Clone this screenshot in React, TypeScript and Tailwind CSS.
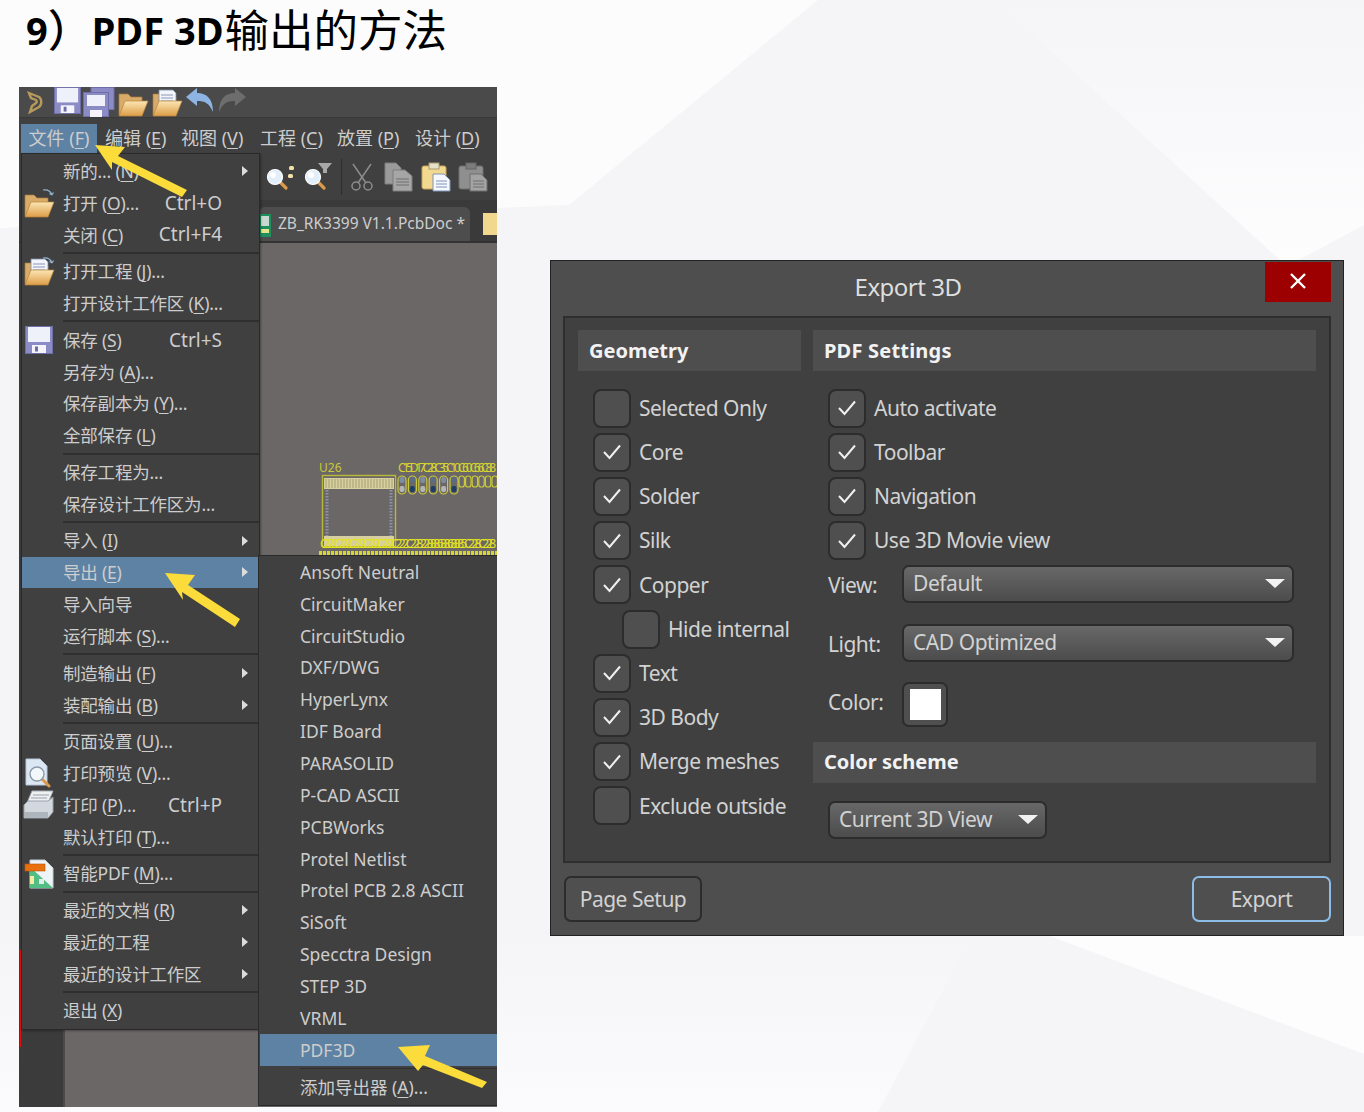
import type { ReactNode } from "react";

const FONT = "font-['Noto_Sans','Noto_Sans_CJK_SC',sans-serif]";

type MenuEntry = { label: string; shortcut?: string; sub?: boolean; icon?: ReactNode; active?: boolean };

function Floppy({ size = 28 }: { size?: number }) {
  return (
    <svg width={size} height={size} viewBox="0 0 28 28">
      <rect x="0.5" y="0.5" width="27" height="27" fill="#8b8bc6" stroke="#6f6fa8" />
      <rect x="3" y="1" width="22" height="15" fill="#eef0fa" />
      <rect x="7" y="19" width="14" height="8" fill="#f4f4fa" />
      <rect x="10" y="20.5" width="3" height="5" fill="#6f6fa8" />
    </svg>
  );
}

function SaveAll() {
  return (
    <svg width="32" height="30" viewBox="0 0 32 30">
      <rect x="8" y="0.5" width="23" height="22" fill="#8b8bc6" stroke="#6f6fa8" />
      <rect x="0.5" y="5.5" width="25" height="24" fill="#8b8bc6" stroke="#6f6fa8" />
      <rect x="4" y="8" width="18" height="11" fill="#eef0fa" />
      <rect x="7" y="23" width="12" height="7" fill="#f4f4fa" />
    </svg>
  );
}

function Folder({ paper, arrow }: { paper?: boolean; arrow?: boolean }) {
  return (
    <svg width="32" height="30" viewBox="0 0 32 30">
      <defs>
        <linearGradient id="folderFront" x1="0" y1="0" x2="0" y2="1">
          <stop offset="0" stopColor="#fbe6b4" />
          <stop offset="1" stopColor="#dd9d48" />
        </linearGradient>
      </defs>
      <path d="M2 28 V7 H11 L14 10 H25 V28 Z" fill="#d9ab68" stroke="#a97a3a" strokeWidth="0.7" />
      {paper && <path d="M8 3 H22 L25 6 V19 H8 Z" fill="#f2f5fb" stroke="#7f8aa5" strokeWidth="0.8" />}
      {paper && <path d="M10 8 H22 M10 11 H22 M10 14 H22" stroke="#8a97b5" strokeWidth="1" />}
      <path d="M2 29 L8 14 H31 L25 29 Z" fill="url(#folderFront)" stroke="#b98436" strokeWidth="0.7" />
      {arrow && <path d="M20 2 Q27 1 29 7 M29 7 L26.5 5.5 M29 7 L30.5 4.5" fill="none" stroke="#8fb3d3" strokeWidth="1.2" />}
    </svg>
  );
}

function Undo({ color, flip }: { color: string; flip?: boolean }) {
  return (
    <svg width="30" height="26" viewBox="0 0 30 26" className={flip ? "-scale-x-100" : ""}>
      <path d="M1 10 L12 1 V6 C22 6 28 12 28 25 C24 16 20 14 12 14 V19 Z" fill={color} />
    </svg>
  );
}

function Logo() {
  return (
    <svg width="16" height="24" viewBox="0 0 16 24">
      <path d="M2 3 L12 7 C15 9 15 15 12 17 L3 22 L5 16 L9 13 C10 12 10 11 9 10 L4 8 Z" fill="none" stroke="#b69a5c" strokeWidth="2.4" />
    </svg>
  );
}

function Magnifier({ extra }: { extra: "dots" | "funnel" }) {
  return (
    <svg width="30" height="30" viewBox="0 0 30 30">
      <path d="M14 19 L21 26" stroke="#d99a4c" strokeWidth="3.2" strokeLinecap="round" />
      <circle cx="10" cy="15" r="7.5" fill="#e2eef9" stroke="#ffffff" strokeWidth="1.2" />
      <circle cx="8" cy="13" r="3" fill="#ffffff" />
      {extra === "dots" ? (
        <>
          <rect x="24" y="4" width="5" height="4" rx="1.5" fill="#f2e2a8" />
          <rect x="23" y="12" width="5" height="4" rx="1.5" fill="#f2e2a8" />
        </>
      ) : (
        <path d="M15 1 H29 L24 7 V11 H20 V7 Z" fill="#a8a8a8" />
      )}
    </svg>
  );
}

function Scissors() {
  return (
    <svg width="24" height="28" viewBox="0 0 24 28" fill="none" stroke="#8c8c8c" strokeWidth="1.5">
      <path d="M3 1 L16 20 M21 1 L8 20" />
      <circle cx="6" cy="23" r="4" />
      <circle cx="18" cy="23" r="4" />
    </svg>
  );
}

function CopyDocs() {
  return (
    <svg width="30" height="30" viewBox="0 0 30 30">
      <path d="M1 1 H12 L17 6 V22 H1 Z" fill="#9a9a9a" stroke="#7c7c7c" />
      <path d="M9 8 H21 L28 14 V29 H9 Z" fill="#a6a6a6" stroke="#7c7c7c" />
      <path d="M12 17 H25 M12 20 H25 M12 23 H25" stroke="#6e6e6e" />
    </svg>
  );
}

function Paste({ gray }: { gray?: boolean }) {
  return (
    <svg width="30" height="30" viewBox="0 0 30 30">
      <rect x="1" y="4" width="24" height="23" rx="2" fill={gray ? "#8f8f8f" : "#f3d990"} stroke={gray ? "#6f6f6f" : "#c9a55c"} />
      <rect x="8" y="1" width="10" height="6" fill={gray ? "#7c7c7c" : "#e6e0c8"} stroke={gray ? "#666" : "#a59a70"} />
      <path d="M12 12 H23 L29 18 V29 H12 Z" fill={gray ? "#a3a3a3" : "#f5f8fc"} stroke={gray ? "#6f6f6f" : "#7f94b8"} />
      <path d="M15 19 H26 M15 22 H26 M15 25 H26" stroke={gray ? "#6e6e6e" : "#7f94b8"} />
    </svg>
  );
}

function PreviewIcon() {
  return (
    <svg width="28" height="30" viewBox="0 0 28 30">
      <path d="M1 1 H15 L22 8 V27 H1 Z" fill="#dce7f4" stroke="#b9c6d8" />
      <path d="M15 19 L24 28" stroke="#d99a4c" strokeWidth="3" strokeLinecap="round" />
      <circle cx="12" cy="16" r="7" fill="#f2f7fc" stroke="#8d99a8" strokeWidth="1.4" />
    </svg>
  );
}

function PrintIcon() {
  return (
    <svg width="32" height="30" viewBox="0 0 32 30">
      <path d="M9 1 H30 L25 13 H4 Z" fill="#eef0f2" stroke="#a8adb4" />
      <path d="M10 5 H26 M8 8 H24" stroke="#9aa2ac" />
      <path d="M1 15 L5 11 H25 L30 7 V22 L25 28 H1 Z" fill="#d3d8de" stroke="#9aa2ac" />
      <rect x="1" y="22" width="24" height="6" fill="#aeb5bd" />
    </svg>
  );
}

function SmartPdfIcon() {
  return (
    <svg width="30" height="30" viewBox="0 0 30 30">
      <path d="M6 1 H21 L29 9 V29 H6 Z" fill="#eef3f6" stroke="#c3cdd6" />
      <path d="M6 8 L29 29 H6 Z" fill="#53bd86" />
      <rect x="6" y="17" width="4" height="8" fill="#f3eda6" />
      <rect x="15" y="20" width="5" height="5" fill="#dfeee6" />
      <rect x="1" y="5" width="20" height="7" fill="#e8710e" stroke="#c2560a" strokeWidth="0.6" />
    </svg>
  );
}

// "&X" underlines the mnemonic letter
function Mnemonic({ text }: { text: string }) {
  const at = text.indexOf("&");
  if (at < 0) return <>{text}</>;
  return (
    <>
      {text.slice(0, at)}
      <span className="underline decoration-1 underline-offset-[3px]">{text[at + 1]}</span>
      {text.slice(at + 2)}
    </>
  );
}

function Row({ entry }: { entry: MenuEntry }) {
  return (
    <div className={`relative flex h-[31.87px] items-center whitespace-nowrap ${entry.active ? "bg-[#5e82a3]" : ""}`}>
      <div className="flex w-[41px] shrink-0 items-center justify-center pr-[7px]">{entry.icon}</div>
      <span className="text-[17.5px] tracking-[-0.2px]">
        <Mnemonic text={entry.label} />
      </span>
      {entry.shortcut && <span className="absolute right-[37px] text-[19px]">{entry.shortcut}</span>}
      {entry.sub && <span className="absolute right-[11px] h-0 w-0 border-y-[5px] border-l-[6px] border-y-transparent border-l-[#dcdcdc]" />}
    </div>
  );
}

function Sep() {
  return (
    <div className="flex h-[4.8px] items-center pl-[41px]">
      <div className="h-[2px] w-full bg-[#2f2f2f]" />
    </div>
  );
}

const groups: MenuEntry[][] = [
  [
    { label: "新的... (&N)", sub: true },
    { label: "打开 (&O)...", shortcut: "Ctrl+O", icon: <Folder arrow /> },
    { label: "关闭 (&C)", shortcut: "Ctrl+F4" },
  ],
  [
    { label: "打开工程 (&J)...", icon: <Folder paper arrow /> },
    { label: "打开设计工作区 (&K)..." },
  ],
  [
    { label: "保存 (&S)", shortcut: "Ctrl+S", icon: <Floppy /> },
    { label: "另存为 (&A)..." },
    { label: "保存副本为 (&Y)..." },
    { label: "全部保存 (&L)" },
  ],
  [{ label: "保存工程为..." }, { label: "保存设计工作区为..." }],
  [
    { label: "导入 (&I)", sub: true },
    { label: "导出 (&E)", sub: true, active: true },
    { label: "导入向导" },
    { label: "运行脚本 (&S)..." },
  ],
  [
    { label: "制造输出 (&F)", sub: true },
    { label: "装配输出 (&B)", sub: true },
  ],
  [
    { label: "页面设置 (&U)..." },
    { label: "打印预览 (&V)...", icon: <PreviewIcon /> },
    { label: "打印 (&P)...", shortcut: "Ctrl+P", icon: <PrintIcon /> },
    { label: "默认打印 (&T)..." },
  ],
  [{ label: "智能PDF (&M)...", icon: <SmartPdfIcon /> }],
  [
    { label: "最近的文档 (&R)", sub: true },
    { label: "最近的工程", sub: true },
    { label: "最近的设计工作区", sub: true },
  ],
  [{ label: "退出 (&X)" }],
];

const exporters = [
  "Ansoft Neutral",
  "CircuitMaker",
  "CircuitStudio",
  "DXF/DWG",
  "HyperLynx",
  "IDF Board",
  "PARASOLID",
  "P-CAD ASCII",
  "PCBWorks",
  "Protel Netlist",
  "Protel PCB 2.8 ASCII",
  "SiSoft",
  "Specctra Design",
  "STEP 3D",
  "VRML",
];

const menuBar = [
  { label: "编辑 (&E)", w: "w-[76px]" },
  { label: "视图 (&V)", w: "w-[79px]" },
  { label: "工程 (&C)", w: "w-[77px]" },
  { label: "放置 (&P)", w: "w-[78px]" },
  { label: "设计 (&D)", w: "w-[80px]" },
];

function PcbArt() {
  const caps = [0, 1, 2, 3, 4, 5];
  const small = [0, 1, 2, 3, 4, 5, 6, 7, 8];
  return (
    <svg width="178" height="97" viewBox="320 460 178 97" className="absolute right-0 top-[217px]">
      <text x="320" y="472" fontSize="12" fill="#c9c93a" fontFamily="Noto Sans">U26</text>
      {/* designators sit on top of each other on the board */}
      <text x="399" y="472" fontSize="12" fill="#d6d62e" fontFamily="Noto Sans" textLength="98" lengthAdjust="spacing">C15D17C28C35C10C60C66C88</text>
      <rect x="323.5" y="475.5" width="73" height="71" fill="none" stroke="#b8b83a" strokeWidth="1.4" />
      <rect x="325" y="478" width="70" height="11" fill="#d8cfa0" />
      <path d="M327 479 V488 M330 479 V488 M333 479 V488 M336 479 V488 M339 479 V488 M342 479 V488 M345 479 V488 M348 479 V488 M351 479 V488 M354 479 V488 M357 479 V488 M360 479 V488 M363 479 V488 M366 479 V488 M369 479 V488 M372 479 V488 M375 479 V488 M378 479 V488 M381 479 V488 M384 479 V488 M387 479 V488 M390 479 V488 M393 479 V488" stroke="#9a9466" strokeWidth="0.8" />
      <rect x="325" y="536" width="70" height="10" fill="#d8cfa0" />
      <path d="M328 490 V536 M392 490 V536" stroke="#8c93a8" strokeWidth="3" strokeDasharray="1.5 1.5" />
      <text x="321" y="548" fontSize="12" fill="#e4e41e" fontFamily="Noto Sans" textLength="176" lengthAdjust="spacing">C222C222C222C222C222C222C2282288868868885C228C228</text>
      {caps.map((c) => (
        <g key={c}>
          <rect x={399 + c * 10.4} y="476" width="8" height="18" rx="4" fill="none" stroke="#c9c93a" strokeWidth="1.2" />
          <rect x={400.5 + c * 10.4} y="477" width="5" height="6" rx="2" fill={c % 2 ? "#5b6b86" : "#7d8ba5"} />
          <rect x={400.5 + c * 10.4} y="486" width="5" height="6" rx="2" fill={c % 2 ? "#1e3d64" : "#b5b5b5"} />
        </g>
      ))}
      {small.map((c) => (
        <rect key={c} x={460 + c * 6.6} y="476" width="5.4" height="11" rx="2.6" fill="none" stroke="#c9c93a" strokeWidth="1.2" />
      ))}
      <path d="M320 553 H498" stroke="#d6d62e" strokeWidth="4" strokeDasharray="3 1" />
    </svg>
  );
}

function LeftShot() {
  return (
    <div className="relative flex h-[1020px] w-[478px] shrink-0 flex-col overflow-hidden bg-[#404040] text-[#cdcdcd]">
      <div className="flex h-[31px] items-start border-b border-[#3a3a3a] bg-[#4a4a4a] pl-[8px]">
        <div className="pt-[3px]">
          <Logo />
        </div>
        <div className="ml-[11px] flex items-start gap-[2px]">
          <Floppy size={27} />
          <SaveAll />
          <Folder />
          <Folder paper />
          <Undo color="#8db4e2" />
          <Undo color="#6d6d6d" flip />
        </div>
      </div>
      <div className="flex h-[35px] items-end whitespace-nowrap pl-[2px] text-[18px]">
        <div className="flex h-[29px] w-[76px] shrink-0 items-center justify-center bg-[#5e82a3] pb-[1px]">
          <Mnemonic text="文件 (&F)" />
        </div>
        {menuBar.map((item) => (
          <div key={item.label} className={`flex h-[29px] shrink-0 items-center pb-[1px] pl-[8px] ${item.w}`}>
            <Mnemonic text={item.label} />
          </div>
        ))}
      </div>

      <div className="flex h-[47px] items-center pl-[246px]">
        <Magnifier extra="dots" />
        <div className="ml-[8px]">
          <Magnifier extra="funnel" />
        </div>
        <div className="ml-[8px] mr-[8px] h-[36px] w-[1px] bg-[#2e2e2e]" />
        <Scissors />
        <div className="ml-[10px] flex gap-[7px]">
          <CopyDocs />
          <Paste />
          <Paste gray />
        </div>
      </div>
      <div className="flex h-[43px] items-end border-b-2 border-[#333] bg-[#3a3a3a] pl-[240px]">
        <div className="flex h-[34px] w-[212px] items-center gap-[6px] whitespace-nowrap rounded-t-md bg-[#4d4d4d] pl-[19px] text-[15.5px]">
          ZB_RK3399 V1.1.PcbDoc *
        </div>
        <div className="mb-[6px] ml-[13px] h-[22px] w-[14px] bg-[#f0d88f]" />
      </div>

      <div className="relative flex-1 bg-[#6b6766]">
        <PcbArt />
        <div className="absolute inset-y-0 left-0 w-[46px] border-r-[2px] border-[#4a4a4a] bg-[#3b3b3b]" />
        <div className="absolute left-[1px] top-[707px] h-[97px] w-[1px] bg-[#e01010]" />
      </div>

      {/* pcb tab icon, mostly under the menu */}
      <div className="absolute left-[240px] top-[127px] h-[23px] w-[12px] bg-[#1f8f5f]">
        <div className="mx-[2px] mt-[2px] h-[10px] w-[8px] bg-[#c9d8d0]" />
        <div className="mx-[2px] mt-[3px] h-[4px] w-[8px] bg-[#e4e48a]" />
      </div>

      {/* file menu */}
      <div className="absolute left-[2px] top-[66px] flex h-[877px] w-[239px] flex-col border border-[#2a2a2a] bg-[#404040] pt-[1px] shadow-[1px_1px_2px_#0005]">
        {groups.map((group, i) => (
          <div key={i}>
            {i > 0 && <Sep />}
            {group.map((entry) => (
              <Row key={entry.label} entry={entry} />
            ))}
          </div>
        ))}
      </div>

      {/* export submenu */}
      <div className="absolute left-[239px] top-[468px] flex h-[551px] w-[240px] flex-col border-y border-l border-[#2a2a2a] bg-[#404040] pl-[1px]">
        {exporters.map((name) => (
          <div key={name} className="flex h-[31.87px] items-center whitespace-nowrap pl-[40px] text-[17.5px]">
            {name}
          </div>
        ))}
        <div className="flex h-[32px] items-center bg-[#5e82a3] pl-[40px] text-[17.5px]">PDF3D</div>
        <div className="flex h-[5px] items-center pl-[40px]">
          <div className="h-[1px] w-full bg-[#2f2f2f]" />
        </div>
        <div className="flex h-[32px] items-center whitespace-nowrap pl-[40px] text-[17.5px]">
          <Mnemonic text="添加导出器 (&A)..." />
        </div>
      </div>

      {/* callout arrows */}
      <svg width="478" height="1020" viewBox="19 87 478 1020" className="pointer-events-none absolute left-0 top-0">
        <path d="M95 145 L125 147 L118 156 L187 190 L182 197 L112 162 L112 170 Z" fill="#fbdc3b" />
        <path d="M165 573 L195 575 L188 585 L240 619 L235 627 L182 592 L183 600 Z" fill="#fbdc3b" />
        <path d="M398 1047 L430 1045 L425 1056 L487 1082 L482 1088 L423 1065 L418 1071 Z" fill="#fbdc3b" />
      </svg>
    </div>
  );
}

function Check({ label, on, className = "" }: { label: string; on?: boolean; className?: string }) {
  return (
    <div className={`flex h-[44.2px] items-center gap-[8px] whitespace-nowrap ${className}`}>
      <div className="flex h-[39px] w-[38px] shrink-0 items-center justify-center rounded-[8px] border-2 border-[#2c2c2c] bg-[#4f4f4f]">
        {on && (
          <svg width="20" height="16" viewBox="0 0 20 16" fill="none" stroke="#f0f0f0" strokeWidth="2">
            <path d="M2 8 L7.5 14 L18 1.5" />
          </svg>
        )}
      </div>
      <span className="pt-[1px] text-[21px] tracking-[-0.5px]">{label}</span>
    </div>
  );
}

function Select({ value, className }: { value: string; className: string }) {
  return (
    <div className={`flex h-[38px] items-center justify-between rounded-[7px] border-2 border-[#2c2c2c] bg-gradient-to-b from-[#686868] to-[#4c4c4c] pl-[9px] pr-[7px] text-[21px] tracking-[-0.45px] ${className}`}>
      <span className="whitespace-nowrap">{value}</span>
      <span className="h-0 w-0 border-x-[10px] border-t-[9px] border-x-transparent border-t-[#f2f2f2]" />
    </div>
  );
}

function Header({ title, className }: { title: string; className: string }) {
  return (
    <div className={`flex h-[41px] items-center bg-[#4e4e4e] pl-[11px] text-[20px] font-bold text-[#f2f2f2] ${className}`}>
      {title}
    </div>
  );
}

function ExportDialog() {
  return (
    <div className="flex h-[676px] w-[794px] shrink-0 flex-col border border-[#222] bg-[#4e4e4e] text-[#d2d2d2]">
      <div className="relative flex h-[55px] items-center justify-center pb-[4px] pr-[78px] text-[24px] tracking-[-0.5px] text-[#dedede]">
        Export 3D
        <div className="absolute right-[12px] top-[1px] flex h-[40px] w-[66px] items-center justify-center bg-[#9c0000] pb-[2px]">
          <svg width="18" height="18" viewBox="0 0 18 18" stroke="#fff" strokeWidth="2.4">
            <path d="M2 2 L16 16 M16 2 L2 16" />
          </svg>
        </div>
      </div>

      <div className="mx-[12px] flex h-[547px] gap-[12px] border-2 border-[#2e2e2e] bg-[#404040] pl-[13px] pr-[13px] pt-[12px]">
        <div className="w-[223px] shrink-0">
          <Header title="Geometry" className="" />
          <div className="pl-[15px] pt-[15px]">
            <Check label="Selected Only" />
            <Check label="Core" on />
            <Check label="Solder" on />
            <Check label="Silk" on />
            <Check label="Copper" on />
            <Check label="Hide internal" className="pl-[29px]" />
            <Check label="Text" on />
            <Check label="3D Body" on />
            <Check label="Merge meshes" on />
            <Check label="Exclude outside" />
          </div>
        </div>
        <div className="min-w-0 flex-1">
          <Header title="PDF Settings" className="tracking-[0.2px]" />
          <div className="pl-[15px] pt-[15px]">
            <Check label="Auto activate" on />
            <Check label="Toolbar" on />
            <Check label="Navigation" on />
            <Check label="Use 3D Movie view" on />
          </div>
          <div className="flex items-center pl-[15px] pt-[2px] text-[21px] tracking-[-0.5px]">
            <span className="w-[74px] pt-[3px]">View:</span>
            <Select value="Default" className="w-[392px]" />
          </div>
          <div className="flex items-center pl-[15px] pt-[21px] text-[21px] tracking-[-0.5px]">
            <span className="w-[74px] pt-[3px]">Light:</span>
            <Select value="CAD Optimized" className="w-[392px]" />
          </div>
          <div className="flex items-center pl-[15px] pt-[20px] text-[21px] tracking-[-0.5px]">
            <span className="w-[74px] pb-[4px]">Color:</span>
            <div className="flex h-[45px] w-[46px] items-center justify-center rounded-[7px] border-2 border-[#2c2c2c] bg-[#4f4f4f]">
              <div className="h-[31px] w-[31px] bg-white" />
            </div>
          </div>
          <Header title="Color scheme" className="mt-[15px]" />
          <div className="pl-[15px] pt-[18px]">
            <Select value="Current 3D View" className="w-[219px]" />
          </div>
        </div>
      </div>

      <div className="flex flex-1 items-start justify-between pl-[13px] pr-[12px] pt-[13px] text-[21px] tracking-[-0.5px]">
        <div className="flex h-[46px] w-[138px] items-center justify-center rounded-[7px] border-2 border-[#2c2c2c] bg-[#4f4f4f] pt-[1px]">Page Setup</div>
        <div className="flex h-[46px] w-[139px] items-center justify-center rounded-[7px] border-2 border-[#8dbde6] bg-[#4f4f4f] pt-[1px]">Export</div>
      </div>
    </div>
  );
}

export default function App() {
  return (
    <div className={`relative h-[1112px] w-[1364px] overflow-hidden bg-[#f5f5f7] ${FONT}`}>
      <svg width="1364" height="1112" viewBox="0 0 1364 1112" className="absolute inset-0">
        <defs>
          <linearGradient id="sheen" x1="0" y1="0" x2="0" y2="1">
            <stop offset="0" stopColor="#f5f5f7" />
            <stop offset="1" stopColor="#fdfdfe" />
          </linearGradient>
          <linearGradient id="floor" x1="0" y1="0" x2="0" y2="1">
            <stop offset="0" stopColor="#f5f5f7" />
            <stop offset="1" stopColor="#fbfbfd" />
          </linearGradient>
        </defs>
        <path d="M0 0 H818 L569 205 L0 228 Z" fill="#fcfcfd" />
        <path d="M995 0 H1364 V225 L1295 262 H1282 Z" fill="url(#sheen)" />
        <path d="M0 936 H972 L878 1112 H0 Z" fill="url(#floor)" />
        <path d="M1050 936 H1364 V1054 Z" fill="#fdfdfe" />
      </svg>
      <h1 className="relative flex h-[60px] items-center whitespace-nowrap pl-[26px] text-black">
        <span className="text-[38px] font-bold">9</span>
        <span className="text-[44px] font-medium">）</span>
        <span className="mr-[1px] text-[38px] font-bold">PDF 3D</span>
        <span className="text-[44.5px] font-normal">输出的方法</span>
      </h1>
      <div className="relative mt-[27px] flex items-start pl-[19px]">
        <LeftShot />
        <div className="ml-[53px] mt-[173px]">
          <ExportDialog />
        </div>
      </div>
    </div>
  );
}
